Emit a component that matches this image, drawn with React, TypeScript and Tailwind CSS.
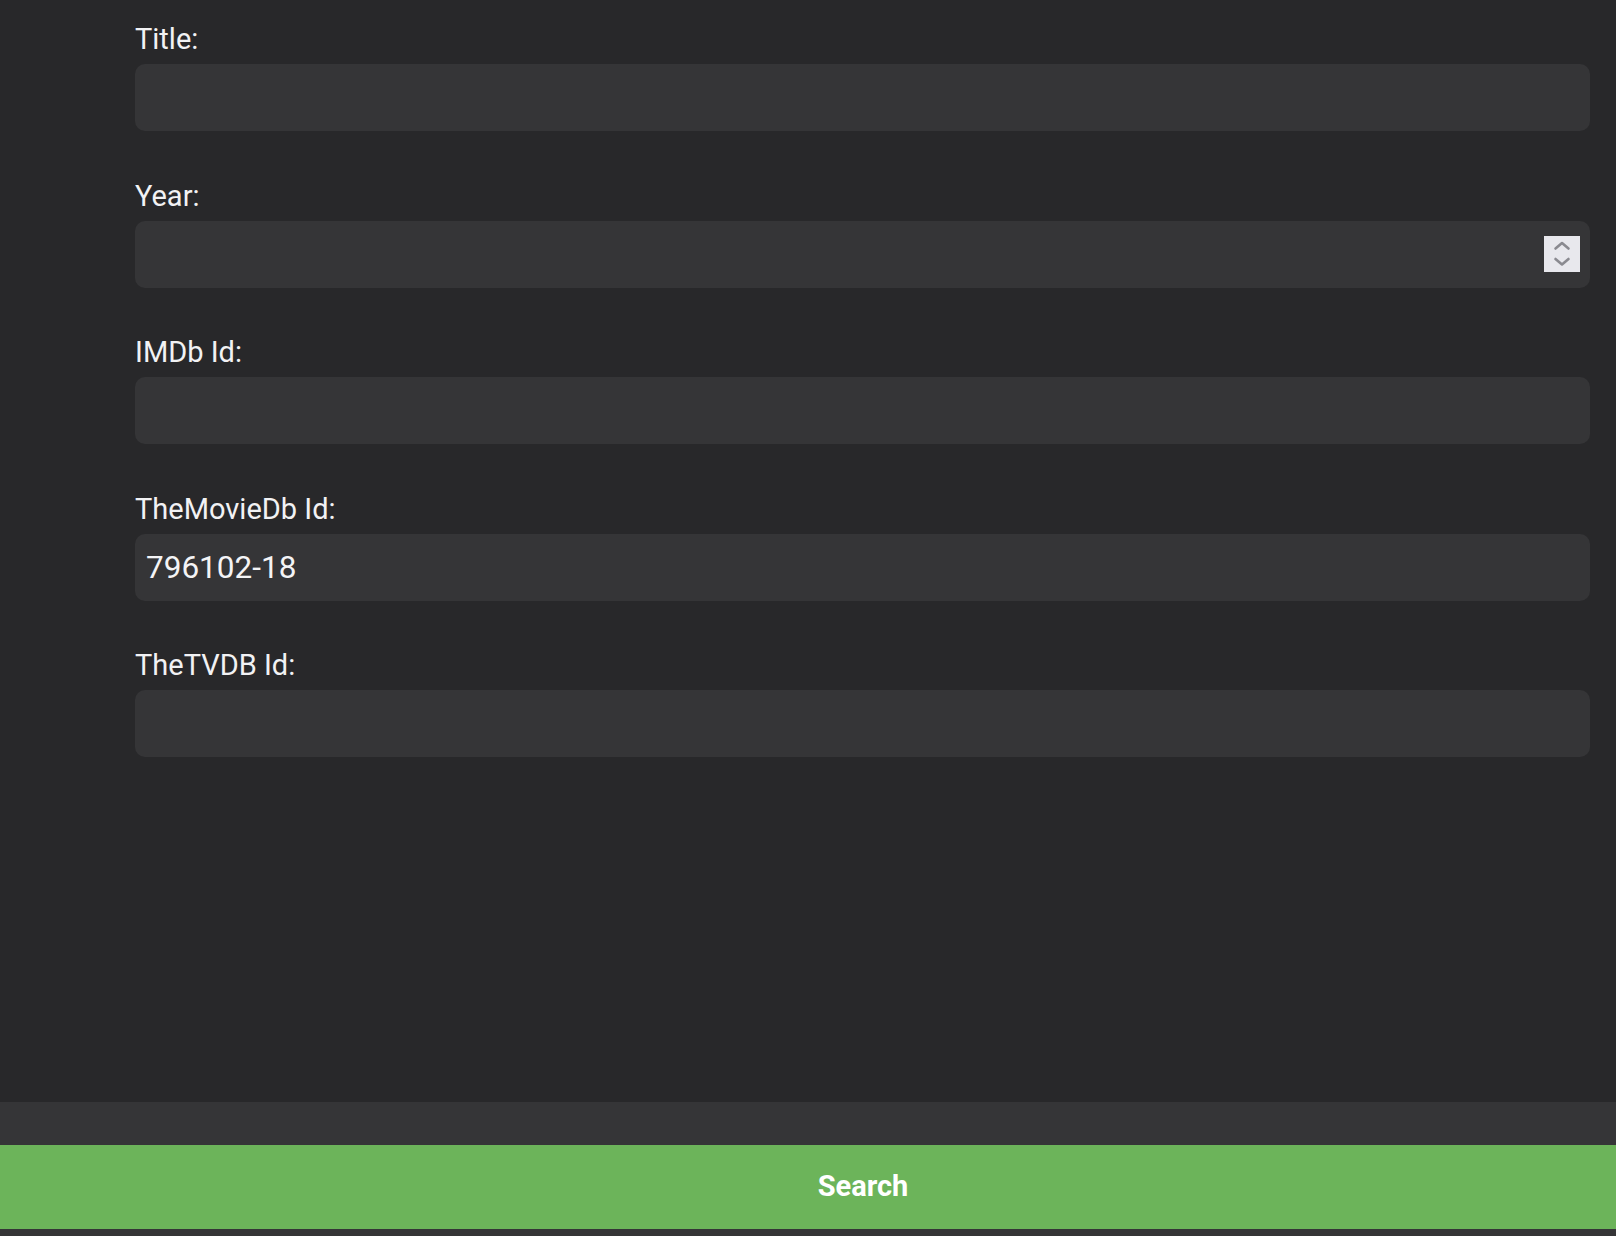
import { useState } from 'react';

const fields = [
  { id: 'title', label: 'Title:', value: '' },
  { id: 'year', label: 'Year:', value: '', stepper: true },
  { id: 'imdb', label: 'IMDb Id:', value: '' },
  { id: 'tmdb', label: 'TheMovieDb Id:', value: '796102-18' },
  { id: 'tvdb', label: 'TheTVDB Id:', value: '' },
];

function Stepper() {
  return (
    <div className="absolute right-[10px] top-1/2 -translate-y-1/2 w-9 h-9 bg-[#e8e8ed]">
      <svg width="36" height="36" viewBox="0 0 36 36" fill="none">
        <path d="M11.5 12.5 L18 7 L24.5 12.5" stroke="#8a8a90" strokeWidth="2.6" strokeLinecap="round" strokeLinejoin="round" />
        <path d="M11.5 23 L18 28.5 L24.5 23" stroke="#8a8a90" strokeWidth="2.6" strokeLinecap="round" strokeLinejoin="round" />
      </svg>
    </div>
  );
}

export default function App() {
  const [values, setValues] = useState<Record<string, string>>(
    Object.fromEntries(fields.map((f) => [f.id, f.value]))
  );

  return (
    <div
      className="h-screen flex flex-col bg-[#28282a] text-[#f2f2f4]"
      style={{ fontFamily: 'Roboto, "Liberation Sans", sans-serif' }}
    >
      <div className="flex-1 pt-[23px] pl-[135px] pr-[26px] flex flex-col gap-[48.5px]">
        {fields.map((f) => (
          <div key={f.id} className="flex flex-col gap-[8px]">
            <label htmlFor={f.id} className="text-[29px] leading-[33px]">
              {f.label}
            </label>
            <div className="relative">
              <input
                id={f.id}
                type="text"
                value={values[f.id]}
                onChange={(e) => setValues({ ...values, [f.id]: e.target.value })}
                className="w-full h-[67px] rounded-[10px] bg-[#353537] pl-[11px] text-[31.5px] text-[#f4f4f6] outline-none"
              />
              {f.stepper && <Stepper />}
            </div>
          </div>
        ))}
      </div>
      <div className="h-[43px] bg-[#353537]" />
      <button className="h-[84px] bg-[#6cb45a] text-white text-[29px] font-bold pl-[110px]">
        Search
      </button>
      <div className="h-[7px] bg-[#353537]" />
    </div>
  );
}
